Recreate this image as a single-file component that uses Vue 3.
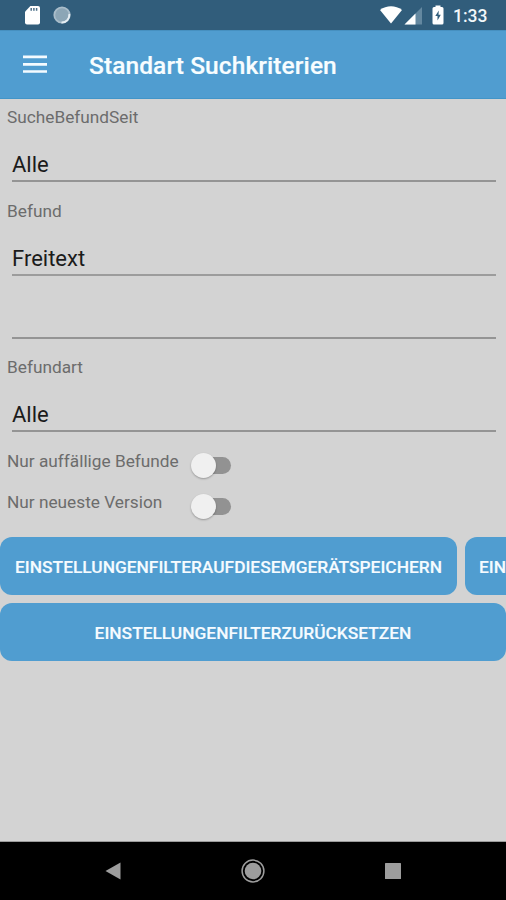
<script setup>
const fields = [
  { label: 'SucheBefundSeit', value: 'Alle', kind: 'since' },
  { label: 'Befund', value: 'Freitext', kind: 'finding', extra: true },
  { label: 'Befundart', value: 'Alle', kind: 'type' },
]
const switches = ['Nur auffällige Befunde', 'Nur neueste Version']
</script>

<template>
  <div class="screen">
    <div class="status">
      <svg class="sd" width="17" height="21" viewBox="0 0 17 21">
        <path d="M6.4 1H14a2 2 0 0 1 2 2v14.500a2 2 0 0 1-2 2H3a2 2 0 0 1-2-2V6.800z" fill="#fff" />
        <path d="M7.200 3v2.700M9.900 3v2.700M12.600 3v2.700" stroke="#4b6f88" stroke-width="1.500" />
      </svg>
      <svg class="sync" width="20" height="20" viewBox="0 0 20 20">
        <circle cx="10" cy="10" r="7.700" fill="#8ca6b6" stroke="#a9bdca" stroke-width="1.800" />
        <path d="M17.300 9A7.500 7.500 0 0 1 9.500 17.500" fill="none" stroke="#e6eef3" stroke-width="2" />
      </svg>
      <span class="grow"></span>
      <svg class="wifi" width="24" height="20" viewBox="0 0 24 20">
        <path d="M1 5C7.500 0 16.500 0 23 5L12 18.500z" fill="#fff" />
      </svg>
      <svg class="cell" width="18" height="18" viewBox="0 0 18 18">
        <path d="M18 0v17.500H.5z" fill="#6488a0" />
        <path d="M11.500 6.500v11H.5z" fill="#fff" />
      </svg>
      <svg class="battery" width="12" height="20" viewBox="0 0 12 20">
        <path d="M3.500 2V.5h5V2H10a1.500 1.500 0 0 1 1.500 1.500V18a1.500 1.500 0 0 1-1.500 1.500H2A1.500 1.500 0 0 1 .5 18V3.500A1.500 1.500 0 0 1 2 2z" fill="#fff" />
        <path d="M6.800 5.500L3.300 11h2.200v4.500L8.800 9.800H6.500z" fill="#315d7b" />
      </svg>
      <span class="time">1:33</span>
    </div>

    <header class="bar">
      <svg class="menu" width="24" height="18" viewBox="0 0 24 18">
        <path d="M0 1.800h24M0 9.300h24M0 16.500h24" stroke="#f4fbff" stroke-width="2.700" />
      </svg>
      <h1>Standart Suchkriterien</h1>
    </header>

    <main>
      <div v-for="f in fields" :key="f.kind" class="field" :class="f.kind">
        <div class="label">{{ f.label }}</div>
        <div class="entry">{{ f.value }}</div>
        <div v-if="f.extra" class="entry blank"></div>
      </div>

      <div class="switches">
        <div v-for="s in switches" :key="s" class="row">
          <span class="label">{{ s }}</span>
          <span class="toggle"><span class="track"></span><span class="thumb"></span></span>
        </div>
      </div>

      <div class="buttons">
        <div class="line">
          <button class="save">EINSTELLUNGENFILTERAUFDIESEMGERÄTSPEICHERN</button>
          <button class="next">EIN</button>
        </div>
        <button class="reset">EINSTELLUNGENFILTERZURÜCKSETZEN</button>
      </div>
    </main>

    <nav>
      <svg width="16" height="18" viewBox="0 0 16 18"><path d="M.5 9L15.500.5v17z" fill="#9d9d9d" /></svg>
      <svg width="24" height="24" viewBox="0 0 24 24">
        <circle cx="12" cy="12" r="10.900" fill="none" stroke="#9d9d9d" stroke-width="1.500" />
        <circle cx="12" cy="12" r="8.300" fill="#9d9d9d" />
      </svg>
      <svg width="16" height="16" viewBox="0 0 16 16"><rect width="16" height="16" rx=".5" fill="#9d9d9d" /></svg>
    </nav>
  </div>
</template>

<style>
body { overflow: hidden; }
</style>

<style scoped>
.screen {
  width: 506px;
  height: 900px;
  display: flex;
  flex-direction: column;
  overflow: hidden;
  background: #d3d3d3;
  font-family: Roboto, "Liberation Sans", sans-serif;
}
svg { display: block; flex: none; }
.status {
  height: 30px;
  flex: none;
  display: flex;
  align-items: center;
  background: #315d7b;
  padding: 0 19px 0 24px;
}
.sync { margin-left: 11px; }
.grow { flex: 1; }
.cell { margin-left: 1px; margin-top: 2px; }
.battery { margin-left: 10px; }
.time {
  width: 34px;
  margin-left: 9px;
  color: #f2f7fa;
  font-size: 17.500px;
  font-weight: 500;
  line-height: 30px;
  padding-top: 2px;
  white-space: nowrap;
}
.bar {
  height: 69px;
  flex: none;
  box-sizing: border-box;
  display: flex;
  align-items: center;
  padding-left: 23px;
  background: #509dd0;
  border-top: 1px solid #4690c0;
  border-bottom: 1px solid #4295c8;
}
.menu { margin-top: -1px; }
h1 {
  margin: 2px 0 0 42px;
  font-size: 24.500px;
  font-weight: 500;
  letter-spacing: .09px;
  line-height: 30px;
  color: #f8fdff;
  -webkit-text-stroke: .2px #f8fdff;
  white-space: nowrap;
}
main { flex: 1; min-height: 0; border-bottom: 1px solid #9b9b9b; box-sizing: border-box; }
.label {
  font-size: 17.250px;
  line-height: 22px;
  padding-left: 7px;
  color: #6c6c6c;
  white-space: nowrap;
}
.field { height: 94px; box-sizing: border-box; padding-top: 7px; }
.finding { height: 156px; }
.entry {
  height: 39px;
  margin: 15px 10px 0 12px;
  box-sizing: border-box;
  border-bottom: 2px solid #949494;
  font-size: 22px;
  line-height: 43px;
  color: #1b1b1b;
}
.finding .entry { border-bottom-color: #9c9c9c; }
.finding .blank { margin-top: 24px; border-bottom-color: #949494; }
.switches { padding-top: 7px; }
.row { height: 41px; display: flex; }
.row .label { width: 183px; }
.toggle { position: relative; width: 42px; height: 28px; }
.track {
  position: absolute;
  left: 6px;
  top: 7px;
  width: 35px;
  height: 17px;
  border-radius: 9px;
  background: #929292;
}
.thumb {
  position: absolute;
  left: 1px;
  top: 3px;
  width: 25px;
  height: 25px;
  border-radius: 50%;
  background: #f0f0f0;
  box-shadow: 0 1px 2px rgba(0, 0, 0, .28);
}
.buttons { display: flex; flex-direction: column; gap: 8px; padding-top: 5px; }
.line { display: flex; gap: 8px; }
button {
  height: 58px;
  flex: none;
  border: 0;
  padding: 1px 0 0;
  border-radius: 12px;
  background: #509dd0;
  color: #f5fbff;
  font-family: inherit;
  font-size: 17.350px;
  font-weight: 500;
  -webkit-text-stroke: .15px #f5fbff;
  white-space: nowrap;
}
.save { width: 457px; }
.next {
  width: 41px;
  padding-left: 14px;
  border-radius: 12px 0 0 12px;
  text-align: left;
}
.reset { width: 506px; }
nav {
  height: 58px;
  flex: none;
  background: #000;
  display: flex;
  align-items: center;
  justify-content: space-between;
  padding: 0 105px;
}
</style>
